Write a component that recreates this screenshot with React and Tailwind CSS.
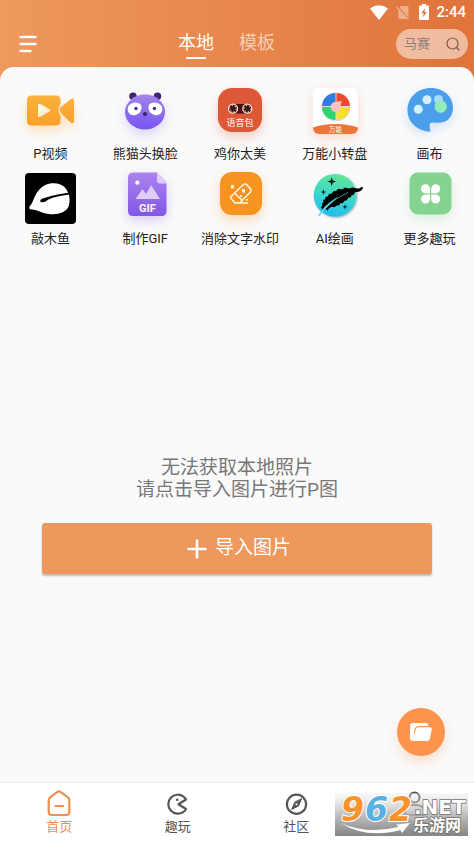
import React, { useState } from 'react';

const VideoIcon = () => (
    <svg viewBox="0 0 72 60" className="w-[72px] h-[60px] overflow-visible" aria-hidden="true">
        <defs>
            <linearGradient id="video" x1="0" y1="0" x2="0" y2="1">
                <stop offset="0" stopColor="#fbb13c" />
                <stop offset="1" stopColor="#fb9f2c" />
            </linearGradient>
            <linearGradient id="play" x1="0" y1="0" x2="1" y2="1">
                <stop offset="0" stopColor="#fff" />
                <stop offset="1" stopColor="#fde0ae" />
            </linearGradient>
        </defs>
        <g className="drop-shadow-[0_6px_6px_rgba(251,165,50,0.3)]">
            <path d="M17.500 15.500H42q4.500 0 4.500 4.500v3.500q-4 6.500 0 13V41q0 4.500-4.500 4.500H17.500Q13 45.500 13 41V20q0-4.500 4.500-4.500Z" fill="url(#video)" />
            <path d="M56.500 19.500Q60 17 60 21v19.500q0 4-3.500 2l-9-9q-4-3.500 0-7Z" fill="url(#video)" />
        </g>
        <path d="M24 25.500q0-2.500 2.200-1.400l9 5q2 1.300 0 2.600l-9 5Q24 38 24 35.500Z" fill="url(#play)" />
    </svg>
);

const PandaIcon = () => (
    <svg viewBox="0 0 72 60" className="w-[72px] h-[60px] overflow-visible" aria-hidden="true">
        <defs>
            <linearGradient id="panda" x1="0" y1="0" x2="0" y2="1">
                <stop offset="0" stopColor="#a484ea" />
                <stop offset="1" stopColor="#7655f2" />
            </linearGradient>
        </defs>
        <circle cx="24" cy="16.300" r="3.700" fill="#39246f" />
        <circle cx="48.500" cy="16.300" r="3.700" fill="#39246f" />
        <ellipse cx="36" cy="32" rx="20" ry="17.500" fill="url(#panda)" className="drop-shadow-[0_5px_6px_rgba(128,95,240,0.25)]" />
        <path d="M19.500 26q3.500-4 9-3.300 4.500.8 4 5.800-.8 5-6 6.500-5.500 1-7.500-3.500-.8-3 .5-5.500Z" fill="#fff" />
        <path d="M52.500 26q-3.500-4-9-3.300-4.500.8-4 5.800.8 5 6 6.500 5.500 1 7.500-3.500.8-3-.5-5.500Z" fill="#fff" />
        <circle cx="27" cy="28.500" r="1.700" fill="#4a2fa0" />
        <circle cx="45.500" cy="28.500" r="1.700" fill="#4a2fa0" />
        <circle cx="36" cy="34" r="2.100" fill="#39246f" />
    </svg>
);

const CassetteIcon = () => (
    <svg viewBox="0 0 72 60" className="w-[72px] h-[60px] overflow-visible" aria-hidden="true">
        <rect x="14" y="8" width="44" height="44" rx="14" fill="#dd5836" className="drop-shadow-[0_5px_6px_rgba(225,90,55,0.28)]" />
        <rect x="29" y="24" width="15" height="9.500" fill="#4a1010" />
        <circle cx="29" cy="28.700" r="4.500" fill="#3d1512" stroke="#f7e3da" strokeWidth="1.300" />
        <circle cx="43.300" cy="28.700" r="4.500" fill="#3d1512" stroke="#f7e3da" strokeWidth="1.300" />
        <circle cx="29" cy="28.700" r="3.200" fill="none" stroke="#f7e3da" strokeWidth="1.200" strokeDasharray="1 2.350" />
        <circle cx="43.300" cy="28.700" r="3.200" fill="none" stroke="#f7e3da" strokeWidth="1.200" strokeDasharray="1 2.350" />
        <text x="36" y="46" textAnchor="middle" fontSize="9" fill="#fff">语音包</text>
    </svg>
);

const WheelIcon = () => (
    <svg viewBox="0 0 72 60" className="w-[72px] h-[60px] overflow-visible" aria-hidden="true">
        <defs>
            <clipPath id="card">
                <rect x="14" y="8" width="45" height="46" rx="6" />
            </clipPath>
        </defs>
        <rect x="14" y="8" width="45" height="46" rx="6" fill="#fff" className="drop-shadow-[0_4px_6px_rgba(250,130,90,0.28)]" />
        <circle cx="37" cy="27" r="14.500" fill="#d9dce0" />
        <path d="M36.500 26V13A13.500 13.500 0 0 0 23 26Z" fill="#2f7de1" />
        <path d="M37.500 26V13A13.500 13.500 0 0 1 51 26Z" fill="#f0482b" />
        <path d="M36.500 27v13A13.500 13.500 0 0 1 23 27Z" fill="#2fd46b" />
        <path d="M37.500 27v13A13.500 13.500 0 0 0 51 27Z" fill="#f5e12e" />
        <path d="M42.500 21l-1 6a5 5 0 1 1-5.500-5Z" fill="#f9c4bf" />
        <g clipPath="url(#card)">
            <ellipse cx="36.500" cy="56" rx="32" ry="12" fill="#ee7437" />
        </g>
        <text x="36.500" y="52" textAnchor="middle" fontSize="6.500" fill="#fff">万能</text>
    </svg>
);

const PaletteIcon = () => (
    <svg viewBox="0 0 72 60" className="w-[72px] h-[60px] overflow-visible" aria-hidden="true">
        <path
            d="M37 8C50 8 59 17 59 27.500S52 43 44 42.800c-4-.2-7-1-8 .7-1 2 0 5 .5 8.300C24 51 13.500 43 13.500 30 13.500 17 24 8 37 8Z"
            fill="#4a9eea"
            className="drop-shadow-[0_4px_6px_rgba(74,158,234,0.25)]"
        />
        <circle cx="24.300" cy="29.300" r="4.500" fill="#d3f0fd" />
        <circle cx="33" cy="19.800" r="4.500" fill="#d3f0fd" />
        <circle cx="44.500" cy="19.500" r="4.500" fill="#a8dcf8" />
        <circle cx="46.700" cy="26.700" r="6.200" fill="#90ecb8" />
    </svg>
);

const WoodFishIcon = () => (
    <svg viewBox="0 0 72 60" className="w-[72px] h-[60px] overflow-visible" aria-hidden="true">
        <rect x="11" y="8" width="51" height="51" rx="4" fill="#000" />
        <path d="M15.500 43.500c-.8-2 1.300-3 2.500-5.500 2-4.500 3.500-9 7-13 3.500-4.500 9-7 15.500-6.700 6.500.3 11 3.500 13 8.200 2.500 4.500 2.700 10.500 1 15C52.500 46.500 46 49.500 37 49.200c-7.500-.2-12-3.500-17-4.500-2.500-.3-4 .2-4.500-1.200Z" fill="#fff" />
        <path d="M54.500 27.800 45 29.200Q35 31 28 33.800q-2.500 1.500-1.300 3.400 3.300.8 8.300-3 7-3.200 19.800-4.500Z" fill="#000" />
    </svg>
);

const GifIcon = () => (
    <svg viewBox="0 0 72 60" className="w-[72px] h-[60px] overflow-visible" aria-hidden="true">
        <defs>
            <linearGradient id="gif" x1="0" y1="0" x2="0" y2="1">
                <stop offset="0" stopColor="#ab84ee" />
                <stop offset="1" stopColor="#8257e4" />
            </linearGradient>
        </defs>
        <path d="M24 7.500h24L57.500 18v28q0 5-5 5H24q-5 0-5-5V12.500q0-5 5-5Z" fill="url(#gif)" className="drop-shadow-[0_4px_6px_rgba(140,100,235,0.3)]" />
        <path d="M48 7.500 57.500 18.500H51q-3 0-3-3Z" fill="#dccdfa" />
        <circle cx="28.300" cy="17.700" r="2.100" fill="#fff" />
        <path d="m26.500 34 7-10 3.500 5 5-9 9 14Z" fill="#dccdfa" />
        <text x="38.500" y="47" textAnchor="middle" fontSize="11" fontWeight="800" fill="#f4edff" className="font-[Roboto]">GIF</text>
    </svg>
);

const EraserIcon = () => (
    <svg viewBox="0 0 72 60" className="w-[72px] h-[60px] overflow-visible" aria-hidden="true">
        <rect x="16" y="7" width="42" height="43" rx="12" fill="#f79321" className="drop-shadow-[0_5px_6px_rgba(250,150,50,0.35)]" />
        <g fill="none" stroke="#fff3d9" strokeWidth="1.700" strokeLinejoin="round" strokeLinecap="round">
            <path d="M27 31.500 39.500 19.500q1.500-1 3 0l4 4.500q1 1.500 0 3L35.500 38h-4.500L27 33.500q-.8-1 0-2Z" />
            <path d="m31 28.500 7.500 7M33 38h10.500" />
        </g>
        <g fill="#fff3d9">
            <rect x="27" y="20" width="2.800" height="3.500" />
            <rect x="38" y="24" width="3" height="3.500" />
            <rect x="36" y="30" width="2" height="2" />
            <rect x="42" y="34" width="2" height="1.500" />
        </g>
    </svg>
);

const FeatherIcon = () => (
    <svg viewBox="0 0 72 60" className="w-[72px] h-[60px] overflow-visible" aria-hidden="true">
        <defs>
            <linearGradient id="ai" x1="0.600" y1="0" x2="0.400" y2="1">
                <stop offset="0" stopColor="#62e596" />
                <stop offset="0.500" stopColor="#3bd9c8" />
                <stop offset="1" stopColor="#20bdf2" />
            </linearGradient>
        </defs>
        <circle cx="36" cy="30.300" r="21.300" fill="url(#ai)" className="drop-shadow-[1px_1px_1px_rgba(30,90,110,0.5)]" />
        <path d="M32.700 12l1 3.500 3.500 1-3.500 1.200-1 3.600-1-3.600-3.500-1.200 3.500-1ZM24.500 24l.6 2.300 2.100.7-2.100.7-.6 2.300-.7-2.300-2.100-.7 2.100-.7ZM46 39l.6 2.200 2.100.6-2.100.7-.6 2.200-.7-2.200-2.100-.7 2.100-.6Z" fill="#081820" />
        <path d="M64 22q.3 2.500-2.500 4-2.500 1.300-5.500 1.300l-1.500 2.700-1.800.2-1.200 2.300-2.200.3-1.800 2.700-2 .2-1.500 2.300-2.500.3-1.500 2.200-2.500 0-2 1.700-2.700-.4-2.800 1.400-1.500 2.500-1.300-1.700-2.200.5-2.500 3 .5-4-1.200-1.300 1.700-1.400-.7-2.100 1.700-1.200-.5-2.600 2.300-.6.2-2.300 2.500-.7 1-2.300 2.800-.4 1.200-2.200 3.200-.6 2.300-2 3.700.6 2.500-1.800 4.500 1 3.300-1q4.500 1.200 6.500.9 1.500-.2 2-1.500Z" fill="#000" />
        <path d="M19.300 50.500Q25 40.500 38 32.500 31 39 26 44q-3.500 3.500-5.500 7Z" fill="#7fe6f0" stroke="#35c8e6" strokeWidth="0.500" />
        <path d="M28 41Q36 33.500 49 27.500" stroke="#4fc9c9" strokeWidth="0.700" fill="none" />
    </svg>
);

const MoreIcon = () => (
    <svg viewBox="0 0 72 60" className="w-[72px] h-[60px] overflow-visible" aria-hidden="true">
        <rect x="15.500" y="7.500" width="42" height="42" rx="8.500" fill="#85d391" className="drop-shadow-[0_5px_6px_rgba(133,211,145,0.25)]" />
        <g fill="#fff">
            <path d="M36 28.300h-4.400a4.500 4.500 0 1 1 4.400-4.400Z" />
            <path d="M37.200 28.300v-4.400a4.500 4.500 0 1 1 4.400 4.400Z" />
            <path d="M36 29.500v4.400a4.500 4.500 0 1 1-4.400-4.400Z" />
            <path d="M37.200 29.500h4.400a4.500 4.500 0 1 1-4.400 4.400Z" />
        </g>
    </svg>
);

const tools = [
    { name: 'P视频', Icon: VideoIcon },
    { name: '熊猫头换脸', Icon: PandaIcon },
    { name: '鸡你太美', Icon: CassetteIcon },
    { name: '万能小转盘', Icon: WheelIcon },
    { name: '画布', Icon: PaletteIcon },
    { name: '敲木鱼', Icon: WoodFishIcon },
    { name: '制作GIF', Icon: GifIcon },
    { name: '消除文字水印', Icon: EraserIcon },
    { name: 'AI绘画', Icon: FeatherIcon },
    { name: '更多趣玩', Icon: MoreIcon },
];

const navItems = [
    {
        name: '首页',
        icon: (
            <>
                <path d="M2.700 10.300q0-1.800 1.400-2.900l7-5.300q1.900-1.300 3.800 0l7 5.300q1.400 1.100 1.400 2.900V22q0 3-3 3H5.700q-3 0-3-3Z" />
                <path d="M9.500 16h7.500" />
            </>
        ),
    },
    {
        name: '趣玩',
        icon: (
            <>
                <path d="M19.500 6.600A9.500 9.500 0 1 0 19.500 21.800Q21.500 20.500 22 19l-7.500-4.700L22 9.500Q21.500 8 19.500 6.600Z" />
                <circle cx="13.200" cy="9.800" r="1.300" fill="currentColor" stroke="none" />
            </>
        ),
    },
    {
        name: '社区',
        icon: (
            <>
                <circle cx="13.500" cy="14.200" r="9.600" />
                <path d="m18.500 9-3 7-6.800 3.400 3-7Z" fill="currentColor" strokeWidth="1" />
                <circle cx="13.500" cy="14.200" r="1" fill="#fff" stroke="none" />
            </>
        ),
    },
    {
        name: '我的',
        icon: (
            <>
                <circle cx="13.500" cy="7.500" r="5" />
                <path d="M4 25v-4q0-6 9.500-6t9.500 6v4Z" />
            </>
        ),
    },
];

const StatusBar = () => (
    <div className="flex h-6 items-center justify-end pr-2 text-white">
        <svg viewBox="0 0 18 15" className="w-[18px] h-[15px] mr-2" fill="currentColor" aria-hidden="true">
            <path d="M0 3.500Q9-3.200 18 3.500L9 15Z" />
        </svg>
        <svg viewBox="0 0 14 15" className="w-[14px] h-[15px] mr-2" aria-hidden="true">
            <path d="M5 1h6.500q1 0 1 1v11q0 1-1 1h-8q-1 0-1-1V4Z" fill="#fff" opacity=".4" />
            <path d="m1 1.500 12 13" stroke="#e0773f" strokeWidth="2.200" />
            <path d="m.5 2 12 12.500" stroke="#fff" opacity=".4" strokeWidth="1.200" />
        </svg>
        <svg viewBox="0 0 12 16" className="w-3 h-4 mr-1.5" aria-hidden="true">
            <path d="M4 0h4v1.500h2q1 0 1 1V15q0 1-1 1H2q-1 0-1-1V2.500q0-1 1-1h2Z" fill="#fff" />
            <path d="M7 4 3.500 9.300h2.200L5 13.500l3.700-5.600H6.400Z" fill="#dc6f38" />
        </svg>
        <span className="font-[Roboto] text-[15px] leading-6 font-medium">2:44</span>
    </div>
);

const SiteLogo = () => (
    <svg viewBox="0 0 133 43" className="w-[133px] h-[43px] overflow-visible" role="img" aria-label="962.NET 乐游网">
        <defs>
            <linearGradient id="plate" x1="0" y1="0" x2="0" y2="1">
                <stop offset="0" stopColor="#e8e8e8" stopOpacity="0.300" />
                <stop offset="0.500" stopColor="#b4b4b4" stopOpacity="0.850" />
                <stop offset="1" stopColor="#7e7e7e" stopOpacity="0.950" />
            </linearGradient>
        </defs>
        <rect width="133" height="43" fill="url(#plate)" />
        <path d="M6.500 30.500q26 11 57 3.500l-2-2.500 13.500-1.500-8 10-1.500-3Q32 46 6.500 30.500Z" fill="#fff" />
        <g fontSize="33" fontWeight="700" fontStyle="italic" stroke="#fff" strokeWidth="2" paintOrder="stroke" className="font-['DejaVu_Sans']">
            <text x="6" y="28" fill="#f7932d">9</text>
            <text x="30" y="28" fill="#58b1e2">6</text>
            <text x="54" y="28" fill="#f7932d">2</text>
        </g>
        <g fill="#fff" stroke="#707070" strokeWidth="1.500" paintOrder="stroke" fontWeight="700">
            <text x="79" y="21" fontSize="20" className="font-['DejaVu_Sans']">.NET</text>
            <text x="78" y="38" fontSize="16">乐游网</text>
        </g>
    </svg>
);

const App = () => {
    const [tab, setTab] = useState('本地');
    const [page, setPage] = useState('首页');
    const [search, setSearch] = useState('');

    return (
        <div className="flex min-h-screen flex-col overflow-hidden bg-linear-to-r from-[#ee995d] to-[#e0743b] font-[Roboto,'Noto_Sans_CJK_SC',sans-serif]">
            <StatusBar />

            {/* Kopfzeile */}
            <header className="grid h-[43px] grid-cols-[1fr_auto_1fr] items-center px-1.5 pb-[3px]">
                <button type="button" aria-label="菜单" className="ml-3 w-5">
                    <svg viewBox="0 0 20 18" className="w-5 h-[18px]" stroke="#fff" strokeWidth="2.400" strokeLinecap="round" aria-hidden="true">
                        <path d="M2.500 2h15M2.500 9h15M2.500 16h10" />
                    </svg>
                </button>
                <nav className="flex gap-[25px] pr-[21px]">
                    {['本地', '模板'].map(t => (
                        <button
                            key={t}
                            type="button"
                            onClick={() => setTab(t)}
                            className={`flex flex-col items-center text-lg leading-7 ${tab === t ? 'text-white' : 'text-white/60'}`}
                        >
                            {t}
                            <span className={`h-0.5 w-5 rounded-full ${tab === t ? 'bg-white' : 'bg-transparent'}`} />
                        </button>
                    ))}
                </nav>
                <label className="flex h-[30px] w-[72px] items-center justify-self-end rounded-full bg-white/50 pr-2 pl-2">
                    <input
                        type="text"
                        aria-label="搜索"
                        value={search}
                        onChange={(e) => setSearch(e.target.value)}
                        placeholder="马赛"
                        className="w-full min-w-0 bg-transparent text-[13px] text-gray-700 outline-none placeholder:text-[#8a7f79]"
                    />
                    <svg viewBox="0 0 14 14" className="w-3.5 h-3.5 shrink-0" fill="none" stroke="#7d5a48" strokeWidth="1.200" strokeLinecap="round" aria-hidden="true">
                        <circle cx="6.500" cy="6.500" r="5.500" />
                        <path d="m10.500 10.500 2.500 2.500" />
                    </svg>
                </label>
            </header>

            <main className="relative flex flex-1 flex-col overflow-hidden rounded-t-[14px] bg-[#fafafa]">
                {/* Werkzeuge */}
                <div className="-mr-[3px] ml-[3px] grid grid-cols-5 gap-y-px pt-[13px]">
                    {tools.map(({ name, Icon }) => (
                        <button key={name} type="button" className="flex flex-col items-center gap-1 text-[13px] leading-5 whitespace-nowrap text-[#222]">
                            <Icon />
                            {name}
                        </button>
                    ))}
                </div>

                {/* Keine Fotos vorhanden */}
                <div className="flex flex-1 flex-col justify-center px-[42px]">
                    <p className="text-center text-[19px] leading-[22px] text-[#777]">
                        无法获取本地照片<br />请点击导入图片进行P图
                    </p>
                    <button type="button" className="mt-[22px] flex h-[51px] items-center justify-center gap-2 rounded-[3px] bg-[#ee985d] pl-1 text-[19px] text-white shadow-[0_2px_2px_rgba(0,0,0,0.25)]">
                        <svg viewBox="0 0 20 20" className="w-5 h-5" stroke="#fff" strokeWidth="2.600" strokeLinecap="round" aria-hidden="true">
                            <path d="M10 1.500v17M1.500 10h17" />
                        </svg>
                        导入图片
                    </button>
                </div>

                <button type="button" aria-label="文件夹" className="absolute right-[29px] bottom-[26px] flex h-12 w-12 items-center justify-center rounded-full bg-[#fc944d] shadow-[0_6px_12px_rgba(252,148,77,0.25)]">
                    <svg viewBox="0 0 22 18" className="w-[22px] h-[18px]" aria-hidden="true">
                        <path d="M3 0h12.500q2.800 0 3 3H8Q5.500 3 5 5.500L3.500 11.500H4.500L6 6q.5-1.700 2.200-1.700H20q2 0 1.800 2L20 15.500Q19.500 18 17 18H3q-3 0-3-3V3q0-3 3-3Z" fill="#fff" />
                    </svg>
                </button>
            </main>

            <footer className="relative border-t border-[#ededed] bg-white">
                <nav className="grid h-[59px] grid-cols-4">
                    {navItems.map(item => (
                        <button
                            key={item.name}
                            type="button"
                            onClick={() => setPage(item.name)}
                            className={`flex flex-col items-center pt-[7px] text-[13px] leading-5 ${page === item.name ? 'text-[#ee8f50]' : 'text-[#555]'}`}
                        >
                            <svg viewBox="0 0 27 27" className="w-[27px] h-[27px]" fill="none" stroke="currentColor" strokeWidth="2.200" strokeLinecap="round" strokeLinejoin="round" aria-hidden="true">
                                {item.icon}
                            </svg>
                            {item.name}
                        </button>
                    ))}
                </nav>
                <div className="pointer-events-none absolute right-1.5 bottom-1.5">
                    <SiteLogo />
                </div>
            </footer>
        </div>
    );
};

export default App;
